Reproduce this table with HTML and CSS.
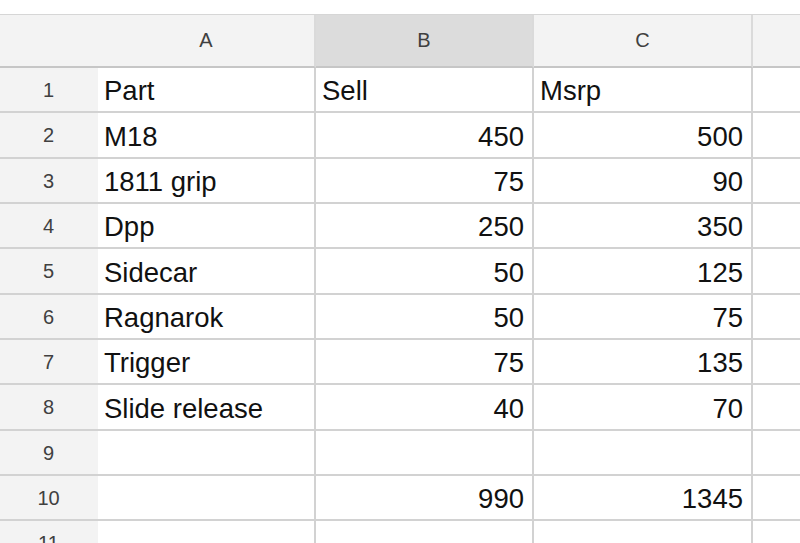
FILE: index.html
```html
<!DOCTYPE html>
<html>
<head>
<meta charset="utf-8">
<link rel="stylesheet" href="styles.css">
</head>
<body>
<div class="sheet">
  <div class="grid">
    <div class="corner"></div>
    <div class="colhead">A</div>
    <div class="colhead active">B</div>
    <div class="colhead">C</div>
    <div class="colhead last"></div>

    <div class="rowhead">1</div><div class="cell">Part</div><div class="cell">Sell</div><div class="cell">Msrp</div><div class="cell last"></div>
    <div class="rowhead">2</div><div class="cell">M18</div><div class="cell num">450</div><div class="cell num">500</div><div class="cell last"></div>
    <div class="rowhead">3</div><div class="cell">1811 grip</div><div class="cell num">75</div><div class="cell num">90</div><div class="cell last"></div>
    <div class="rowhead">4</div><div class="cell">Dpp</div><div class="cell num">250</div><div class="cell num">350</div><div class="cell last"></div>
    <div class="rowhead">5</div><div class="cell">Sidecar</div><div class="cell num">50</div><div class="cell num">125</div><div class="cell last"></div>
    <div class="rowhead">6</div><div class="cell">Ragnarok</div><div class="cell num">50</div><div class="cell num">75</div><div class="cell last"></div>
    <div class="rowhead">7</div><div class="cell">Trigger</div><div class="cell num">75</div><div class="cell num">135</div><div class="cell last"></div>
    <div class="rowhead">8</div><div class="cell">Slide release</div><div class="cell num">40</div><div class="cell num">70</div><div class="cell last"></div>
    <div class="rowhead">9</div><div class="cell"></div><div class="cell"></div><div class="cell"></div><div class="cell last"></div>
    <div class="rowhead">10</div><div class="cell"></div><div class="cell num">990</div><div class="cell num">1345</div><div class="cell last"></div>
    <div class="rowhead">11</div><div class="cell"></div><div class="cell"></div><div class="cell"></div><div class="cell last"></div>
  </div>
</div>
</body>
</html>
```

FILE: styles.css
```css
* { box-sizing: border-box; }
html, body {
  margin: 0;
  padding: 0;
  background: #ffffff;
  overflow: hidden;
  width: 800px;
  height: 543px;
}
.sheet {
  padding-top: 14px;
  font-family: "Liberation Sans", Arial, sans-serif;
}
.grid {
  display: grid;
  grid-template-columns: 98px 218px 218px 219px 47px;
  grid-template-rows: 53px 45px 46px 45px 45px 46px 45px 45px 46px 45px 45px 45px;
  border-top: 1px solid #d6d6d6;
}
.corner, .colhead {
  background: #f3f3f3;
  border-bottom: 2px solid #c6c6c6;
  border-right: 2px solid #dadada;
  display: flex;
  align-items: center;
  justify-content: center;
  font-size: 20px;
  color: #404040;
}
.corner { border-right: none; }
.colhead.active { background: #dcdcdc; }
.colhead.last { border-right: none; }
.rowhead {
  background: #f3f3f3;
  border-bottom: 2px solid #d2d2d2;
  display: flex;
  align-items: center;
  justify-content: center;
  font-size: 20px;
  color: #404040;
  padding-top: 1px;
  padding-right: 1px;
}
.cell {
  border-bottom: 2px solid #d2d2d2;
  border-right: 2px solid #d2d2d2;
  display: flex;
  align-items: center;
  padding: 3px 8px 0 6px;
  font-size: 27.5px;
  color: #111111;
  white-space: nowrap;
}
.cell.num { justify-content: flex-end; }
.cell.last { border-right: none; }
```
